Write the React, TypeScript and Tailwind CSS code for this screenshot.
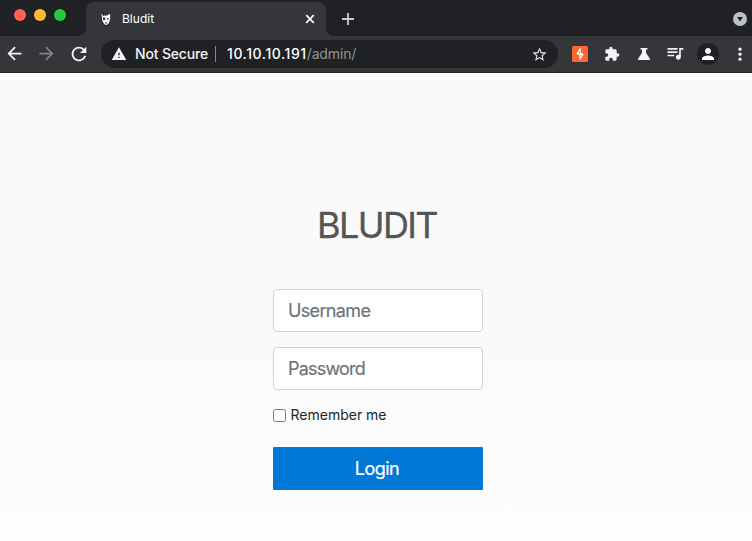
import React from "react";
import {
  MdArrowBack,
  MdArrowForward,
  MdRefresh,
  MdWarning,
  MdStarBorder,
  MdExtension,
  MdQueueMusic,
  MdPerson,
} from "react-icons/md";

function DogIcon() {
  return (
    <svg viewBox="0 0 12 16" className="h-4 w-3">
      <path d="M1 0 4 4H7L10.5 1V9L9 13 6.5 15 3.5 14 1.5 10Z" fill="#17181a" />
      <path d="M1.6 1.6V6L3 5ZM2 5.5 4 4.6H7L10.2 2.6V8.5L8.9 12.2 7 14 4.4 13.6 2.6 10.8 1.8 8Z" fill="#f7f7f7" />
      <path d="M3 6.6H5.2V9H3ZM7.2 7H8.6V8.4H7.2ZM5 11.6H7V12.5H5Z" fill="#292a2d" />
      <path d="M3.6 7.4h.8v.8h-.8z" fill="#aaa" />
    </svg>
  );
}

function TabStrip() {
  return (
    <div className="flex h-9 bg-[#202124]">
      <div className="flex w-[86px] gap-2 pt-[9px] pl-[14px]">
        <span className="size-3 rounded-full bg-[#ff5f57]" />
        <span className="size-3 rounded-full bg-[#febc2e]" />
        <span className="size-3 rounded-full bg-[#28c840]" />
      </div>
      <div className="relative mt-[2px] flex h-[34px] w-[240px] items-center rounded-t-lg bg-[#35363a] pr-[9px] pl-[14px] text-white">
        <svg className="absolute bottom-0 -left-2 size-2" viewBox="0 0 8 8"><path d="M8 0V8H0A8 8 0 0 0 8 0Z" fill="#35363a" /></svg>
        <svg className="absolute -right-2 bottom-0 size-2" viewBox="0 0 8 8"><path d="M0 0V8H8A8 8 0 0 1 0 0Z" fill="#35363a" /></svg>
        <DogIcon />
        <span className="ml-[10px] flex-1 text-xs leading-4 tracking-[0.02px]">Bludit</span>
        <svg viewBox="0 0 14 14" className="size-[14px]" stroke="white" strokeWidth="1.7"><path d="m3.2 3.2 7.6 7.6M10.8 3.2l-7.6 7.6" /></svg>
      </div>
      <div className="flex flex-1 items-center justify-between pt-[2px] pr-[5px] pl-[15px]">
        <svg viewBox="0 0 14 14" className="size-[14px]" stroke="#c8cace" strokeWidth="1.8"><path d="M7 1v12M1 7h12" /></svg>
        <svg viewBox="0 0 14 14" className="size-[14px]"><circle cx="7" cy="7" r="7" fill="#bdc1c6" /><path d="M4 5h6L7 9.5Z" fill="#202124" /></svg>
      </div>
    </div>
  );
}

function Toolbar() {
  return (
    <div className="flex h-[37px] items-center border-b border-[#242528] bg-[#35363a] text-[#f1f3f4]">
      <div className="flex w-[101px] gap-[11px] pl-1">
        <MdArrowBack className="size-[21px]" />
        <MdArrowForward className="size-[21px] text-[#828387]" />
        <MdRefresh className="size-[22px]" />
      </div>
      <div className="flex h-7 w-[457px] items-center rounded-full bg-[#202124] pr-[10px] pl-[10px] text-sm">
        <MdWarning className="size-4" />
        <span className="ml-2 w-[80px] whitespace-nowrap font-medium tracking-[-0.16px]">Not Secure</span>
        <span className="h-4 w-px bg-[#85878b]" />
        <span className="ml-[11px] flex-1 text-white"><span className="font-medium tracking-[0.57px]">10.10.10.191</span><span className="tracking-[-0.15px] text-[#919397]">/admin/</span></span>
        <MdStarBorder className="size-[17px] text-[#e0e2e5]" />
      </div>
      <div className="ml-[14px] flex flex-1 items-center">
        <svg viewBox="0 0 16 16" className="size-4">
          <rect width="16" height="16" rx="1.5" fill="#ff6633" />
          <path d="M8.7 2.2V6.6L11.7 8.2 8.2 13.8H7.4V9.2L4.3 7.8 7.9 2.2Z" fill="white" />
          <path d="M7.7 4V7.3L6.5 7.2ZM8.5 8.7 9.7 9 8.5 11.5Z" fill="#ff6633" />
        </svg>
        <MdExtension className="ml-4 size-4" />
        <svg viewBox="0 0 14 14" className="ml-[17px] size-[14px]" fill="currentColor"><path d="M3.5 1h7v1.4H9v3.4l4 6.2v1H1v-1l4-6.2V2.4H3.5Z" /></svg>
        <MdQueueMusic className="ml-[14px] size-5 -translate-y-px" />
        <span className="ml-3 flex size-[22px] items-center justify-center rounded-full bg-[#202124]"><MdPerson className="size-[18px] text-white" /></span>
        <svg viewBox="0 0 4 14" className="ml-[19px] h-[14px] w-1 shrink-0" fill="currentColor"><circle cx="2" cy="2.2" r="1.6" /><circle cx="2" cy="7.2" r="1.6" /><circle cx="2" cy="12.2" r="1.6" /></svg>
      </div>
    </div>
  );
}

function LoginForm() {
  return (
    <form className="mx-auto flex w-[210px] translate-x-[2px] flex-col pt-[130px]" onSubmit={(event) => event.preventDefault()}>
      <h1 className="pr-[2px] text-center text-[36px] leading-[44px] tracking-[-1.6px] text-[#555] [-webkit-text-stroke:0.3px_#555]">BLUDIT</h1>
      <input aria-label="Username" placeholder="Username" className="mt-[42px] h-[43px] rounded-[4px] border border-[#ced4da] bg-white px-[14px] text-lg tracking-[-0.65px] outline-none placeholder:text-[#6c757d] placeholder:[-webkit-text-stroke:0.2px_#6c757d]" />
      <input aria-label="Password" type="password" placeholder="Password" className="mt-[15px] h-[43px] rounded-[4px] border border-[#ced4da] bg-white px-[14px] text-lg tracking-[-0.8px] outline-none placeholder:text-[#6c757d] placeholder:[-webkit-text-stroke:0.2px_#6c757d]" />
      <label className="mt-[15px] flex h-5 items-center text-sm text-[#212529]">
        <input type="checkbox" className="mr-[4.5px] size-[13px] appearance-none rounded-[2.5px] border border-[#767676] bg-white" />
        Remember me
      </label>
      <button type="submit" className="mt-[22px] h-[43px] rounded-[1px] bg-[#0078d7] pr-[2px] text-lg tracking-[-0.55px] text-white [-webkit-text-stroke:0.2px_white]">Login</button>
    </form>
  );
}

export default function App() {
  return (
    <div className="flex h-[541px] w-[752px] flex-col overflow-hidden font-['Inter','Liberation_Sans',sans-serif]">
      <TabStrip />
      <Toolbar />
      <main className="flex-1 bg-linear-to-b from-[#fafafa] from-60% to-[#fdfdfd]"><LoginForm /></main>
    </div>
  );
}
